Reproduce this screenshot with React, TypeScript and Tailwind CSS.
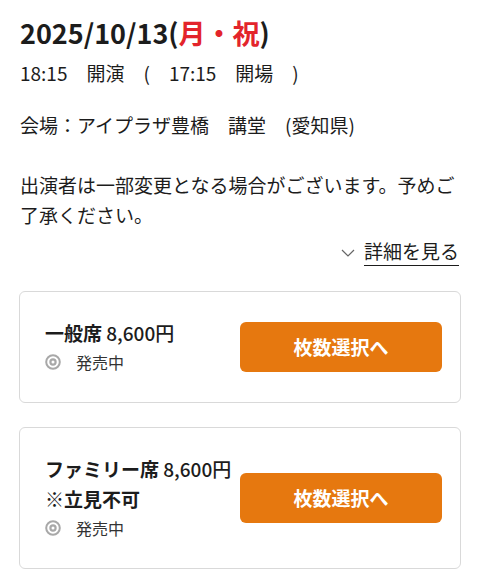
const FONT = { fontFamily: '"Noto Sans CJK JP", "Noto Sans", sans-serif' };

type Seat = { name: string; price: string; note?: string };

const SEATS: Seat[] = [
  { name: "一般席", price: "8,600円" },
  { name: "ファミリー席", price: "8,600円", note: "※立見不可" },
];

function StatusIcon() {
  return (
    <svg viewBox="0 0 16 16" className="w-4 h-4 shrink-0" fill="none" stroke="#a8a8a8">
      <circle cx="8" cy="8" r="6.8" strokeWidth={2} />
      <circle cx="8" cy="8" r="2.6" strokeWidth={2.2} />
    </svg>
  );
}

function SeatCard({ seat }: { seat: Seat }) {
  return (
    <div className="flex items-center justify-between rounded-md border border-[#d9d9d9] bg-white py-[26px] pl-[25px] pr-[18px]">
      <div>
        <p className="text-[19px] leading-[30px] text-[#1c1c1c]">
          <span className="font-bold">{seat.name}</span> <span className="font-medium">{seat.price}</span>
        </p>
        {seat.note && (
          <p className="text-[19px] leading-[30px] font-bold text-[#1c1c1c]">{seat.note}</p>
        )}
        <div className="flex items-center gap-[15px] leading-[28px]">
          <StatusIcon />
          <span className="text-[16px] text-[#333]">発売中</span>
        </div>
      </div>
      <button className="w-[202px] h-[50px] rounded-md bg-[#e6780f] text-white text-[19px] font-bold">
        枚数選択へ
      </button>
    </div>
  );
}

export default function App() {
  return (
    <div className="w-[480px] min-h-[585px] bg-white px-[19px] pt-[15px]" style={FONT}>
      <div className="pl-px text-[#1c1c1c]">
        <h1 className="text-[27px] leading-[36px] font-bold">
          2025/10/13(<span className="text-[#e3242b]">月・祝</span>)
        </h1>
        <p className="mt-2 text-[19px] leading-[28px]">18:15　開演　(　17:15　開場　)</p>
        <p className="mt-6 text-[19px] leading-[28px]">会場：アイプラザ豊橋　講堂　(愛知県)</p>
        <p className="mt-[31px] text-[19px] leading-[30px]">
          出演者は一部変更となる場合がございます。予めご了承ください。
        </p>
        <div className="mt-[7px] flex items-center justify-end gap-[9px] pr-[2px]">
          <svg viewBox="0 0 14 8" className="w-[14px] h-[8px] mt-1" fill="none" stroke="#666" strokeWidth={1.2}>
            <polyline points="1,1 7,7 13,1" />
          </svg>
          <a className="text-[19px] leading-[28px] underline underline-offset-[6px] text-[#1c1c1c]">詳細を見る</a>
        </div>
      </div>

      <div className="mt-[26px] flex flex-col gap-6 pb-4">
        {SEATS.map((s) => (
          <SeatCard key={s.name} seat={s} />
        ))}
      </div>
    </div>
  );
}
